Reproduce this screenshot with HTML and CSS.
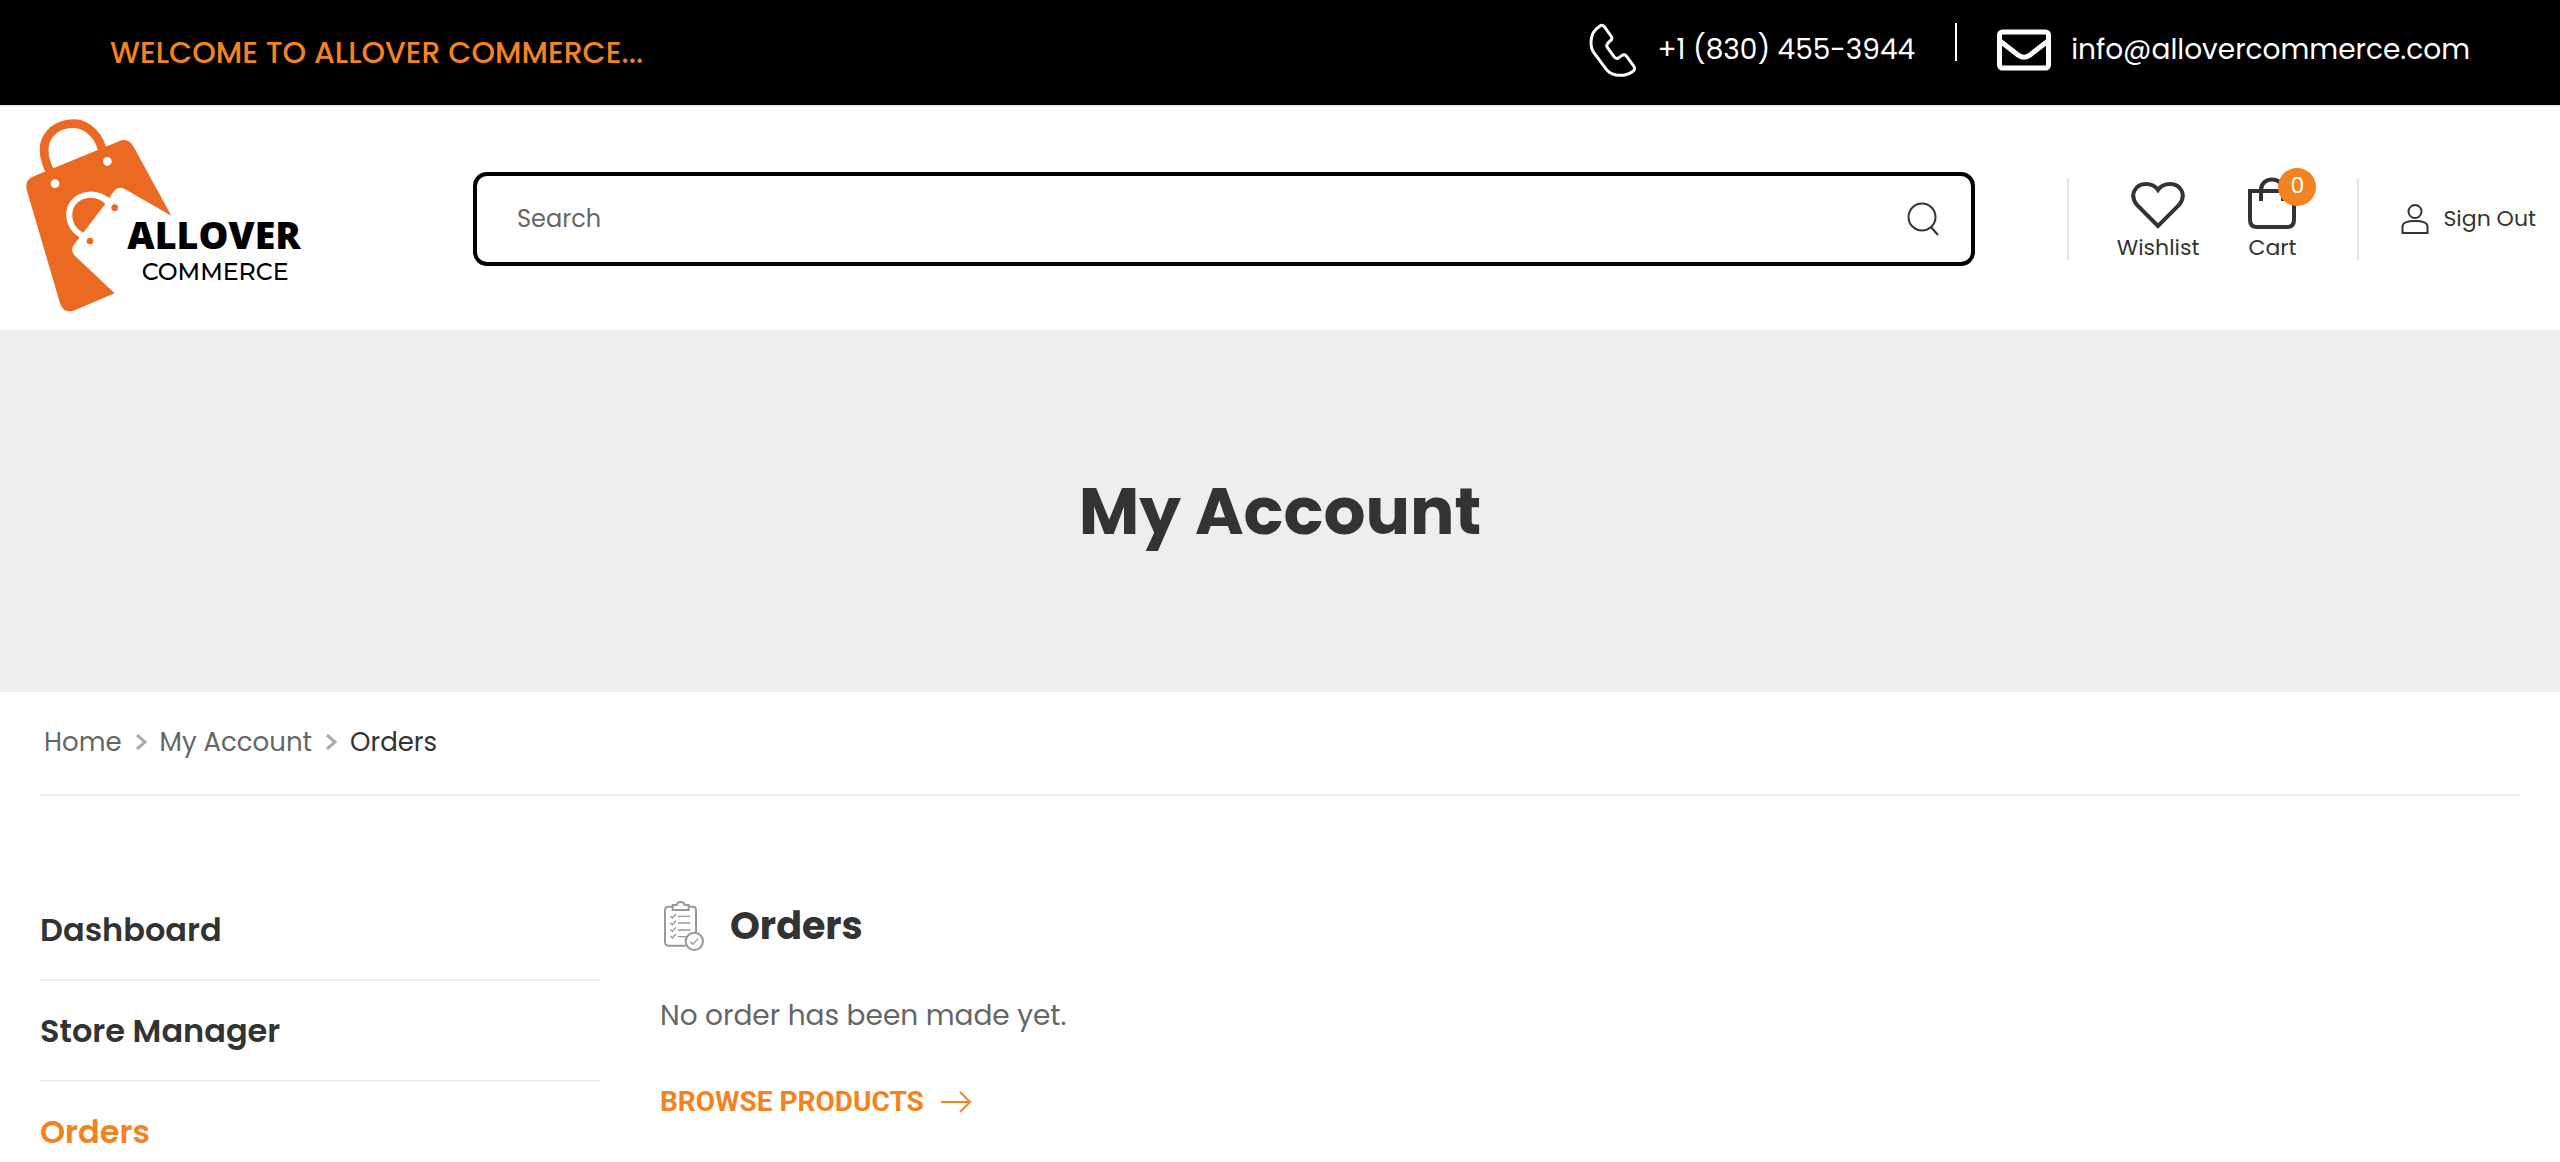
FILE: index.html
```html
<!DOCTYPE html>
<html lang="en">
<head>
<meta charset="utf-8">
<meta name="viewport" content="width=device-width, initial-scale=1">
<title>My Account – Orders | Allover Commerce</title>
<link rel="stylesheet" href="styles.css">
</head>
<body>
<div class="topbar">
  <p class="welcome">WELCOME TO ALLOVER COMMERCE...</p>
  <div class="contact">
    <a class="contact-link" href="tel:+18304553944">
      <svg class="icon-phone" viewBox="0 0 144 162" aria-hidden="true"><path d="M34 8 C16 20 6 32 6 62 Q6 76 14 88 L52 139 C62 152 76 157 94 157 Q114 157 130 146 Q141 139 134 129 L113 100 Q107 92 98 98 L90 104 Q82 110 75 101 L56 75 Q50 66 58 59 L64 53 Q72 48 66 39 L46 11 Q40 4 34 8 Z"/></svg>
      <span>+1 (830) 455-3944</span>
    </a>
    <span class="contact-divider"></span>
    <a class="contact-link" href="mailto:info@allovercommerce.com">
      <svg class="icon-mail" viewBox="0 0 54 42" aria-hidden="true"><rect x="2.500" y="3" width="49" height="36" rx="3"/><path d="M3 12 L21 26 Q27 30.500 33 26 L51 12"/></svg>
      <span>info@allovercommerce.com</span>
    </a>
  </div>
</div>

<header class="header">
  <a class="logo" href="#" aria-label="Allover Commerce">
    <svg class="logo-art" viewBox="42 40 840 597">
      <path class="logo-handle" d="M121 200 C96 150 96 112 120 84 C146 52 200 44 234 68 C258 84 270 106 277 132"/>
      <path class="logo-bag" d="M68 213 L334 104 Q356 98 370 122 L484 330 L344 250 Q326 240 312 256 L298 277 C276 260 252 254 228 259 C196 264 172 290 169 318 C166 350 180 378 209 395 L190 420 Q182 434 192 448 L314 563 L190 615 Q162 624 151 596 L50 252 Q44 224 68 213 Z"/>
      <path class="logo-bag" d="M286 294 C268 276 240 271 218 281 C196 291 186 310 187 330 C188 354 200 370 220 381 Z"/>
      <circle class="logo-hole" cx="135" cy="234" r="13"/>
      <circle class="logo-hole" cx="292" cy="167" r="13"/>
      <circle class="logo-bag" cx="314" cy="306" r="10"/>
      <circle class="logo-bag" cx="240" cy="406" r="10"/>
      <text class="logo-name" x="352" y="430">ALLOVER</text>
      <text class="logo-sub" x="395" y="523">COMMERCE</text>
    </svg>
  </a>
  <form class="search" role="search">
    <input class="search-input" type="search" placeholder="Search" aria-label="Search">
    <button class="search-button" type="submit" aria-label="Search">
      <svg class="icon-search" viewBox="0 0 32 36" aria-hidden="true"><circle cx="15" cy="16" r="13.500"/><path d="M24 26 L31 34"/></svg>
    </button>
  </form>
  <nav class="tools" aria-label="Shop tools">
    <a class="tool" href="#">
      <svg class="icon-tool" viewBox="0 0 54 54" aria-hidden="true"><path d="M27 50 L6 29 C-2 19 4 8 15 8 C21 8 25 11 27 14 C29 11 33 8 39 8 C50 8 56 19 48 29 Z"/></svg>
      <span>Wishlist</span>
    </a>
    <a class="tool" href="#">
      <span class="cart-icon">
        <svg class="icon-tool" viewBox="0 0 54 54" aria-hidden="true"><path d="M5 15 H49 V44 Q49 51 42 51 H12 Q5 51 5 44 Z M16 25 V14 C16 0 38 0 38 14 V25"/></svg>
        <span class="badge">0</span>
      </span>
      <span>Cart</span>
    </a>
  </nav>
  <a class="sign-out" href="#">
    <svg class="icon-user" viewBox="0 0 28 32" aria-hidden="true"><circle cx="14" cy="8.500" r="6.500"/><path d="M1.500 30 V23 C2 19.500 8 18 14 18 S26 19.500 26.500 23 V30 Z"/></svg>
    <span>Sign Out</span>
  </a>
</header>

<div class="banner"><h1 class="banner-title">My Account</h1></div>

<div class="container">
  <nav class="breadcrumb" aria-label="Breadcrumb">
    <a href="#">Home</a>
    <svg class="icon-chevron" viewBox="0 0 12 16" aria-hidden="true"><path d="M2 1 L10 8 L2 15"/></svg>
    <a href="#">My Account</a>
    <svg class="icon-chevron" viewBox="0 0 12 16" aria-hidden="true"><path d="M2 1 L10 8 L2 15"/></svg>
    <span class="breadcrumb-current" aria-current="page">Orders</span>
  </nav>
  <div class="account">
    <nav class="side-nav" aria-label="Account">
      <a class="side-link" href="#">Dashboard</a>
      <a class="side-link" href="#">Store Manager</a>
      <a class="side-link side-link-active" href="#">Orders</a>
    </nav>
    <main class="orders">
      <h2 class="orders-title">
        <svg class="icon-orders" viewBox="0 0 120 150" aria-hidden="true"><path class="orders-frame" d="M65 134 H14 Q3 134 3 123 V27 Q3 17 14 17 H26 M74 17 H86 Q96 17 96 27 V93 M26 12 H38 C40 0 60 0 62 12 H74 V27 H26 Z"/><circle class="orders-frame" cx="91" cy="121" r="26"/><path class="orders-lines" d="M42 46 H79 M42 66 H79 M42 87 H79 M42 107 H66 M19 45 L25 51 L36 39 M19 65 L25 71 L36 59 M19 85 L25 91 L36 79 M19 105 L25 111 L36 99 M79 122 L87 130 L102 113"/></svg>
        <span>Orders</span>
      </h2>
      <p class="orders-text">No order has been made yet.</p>
      <a class="browse" href="#">
        <span>BROWSE PRODUCTS</span>
        <svg class="icon-arrow" viewBox="0 0 32 24" aria-hidden="true"><path d="M1 12 H30 M20 2 L30 12 L20 22"/></svg>
      </a>
    </main>
  </div>
</div>
</body>
</html>
```
FILE: styles.css
```css
:root {
  --orange: #f38321;
  --ink: #333;
  --line: #eee;
}

* { box-sizing: border-box; }

body {
  margin: 0;
  background: #fff;
  color: #666;
  font: 28px/40px Poppins, Inter, sans-serif;
}

a { color: inherit; text-decoration: none; }
h1, h2, p { margin: 0; }
svg { display: block; flex: none; fill: none; stroke: currentColor; }

.topbar {
  display: flex;
  align-items: center;
  justify-content: space-between;
  padding: 0 90px 0 110px;
  height: 107px;
  background: #000;
  border-bottom: 2px solid var(--line);
  color: #fff;
}
.welcome { color: var(--orange); font-size: 30px; font-weight: 500; }
.contact { display: flex; align-items: center; gap: 40px; padding-bottom: 6px; }
.contact-link { display: flex; align-items: center; gap: 20px; }
.contact-divider { align-self: flex-start; width: 2px; height: 38px; background: #fff; }
.icon-phone { width: 48px; height: 54px; stroke-width: 9; }
.icon-mail { width: 54px; height: 42px; stroke-width: 5; }

.header {
  display: flex;
  align-items: center;
  padding: 12px 24px;
  color: var(--ink);
  font-size: 22px;
}
.logo { flex: none; margin-right: 169px; }
.logo-art { width: 280px; height: 199px; }
.logo-handle { stroke: #eb6a23; stroke-width: 26; }
.logo-bag { fill: #eb6a23; stroke: none; }
.logo-hole { fill: #fff; stroke: none; }
.logo-name { font: 800 113px "Open Sans", sans-serif; fill: #000; stroke: none; }
.logo-sub { font: 500 71px Montserrat, Inter, sans-serif; fill: #000; stroke: none; }

.search {
  display: flex;
  align-items: center;
  flex: 1;
  height: 94px;
  padding: 0 32px 0 40px;
  border: 4px solid #000;
  border-radius: 14px;
}
.search-input {
  flex: 1;
  min-width: 0;
  padding: 0;
  border: 0;
  outline: 0;
  background: none;
  color: #666;
  font: inherit;
  font-size: 24px;
}
.search-input::placeholder { color: #666; opacity: 1; }
.search-button { padding: 0; border: 0; background: none; color: var(--ink); }
.icon-search { width: 32px; height: 36px; stroke-width: 2; }

.tools {
  display: flex;
  align-items: center;
  gap: 46px;
  height: 82px;
  margin: 0 42px 0 92px;
  padding: 0 58px 0 48px;
  border: solid #e5e5e5;
  border-width: 0 2px;
}
.tool { display: flex; flex-direction: column; align-items: center; gap: 4px; line-height: 28px; }
.icon-tool { width: 54px; height: 54px; stroke-width: 4; }
.cart-icon { position: relative; }
.badge {
  position: absolute;
  top: -8px;
  right: -17px;
  width: 38px;
  height: 38px;
  border-radius: 50%;
  background: var(--orange);
  color: #fff;
  line-height: 36px;
  text-align: center;
}
.sign-out { display: flex; align-items: center; gap: 14px; white-space: nowrap; }
.icon-user { width: 28px; height: 32px; stroke-width: 2; }

.banner {
  display: flex;
  align-items: center;
  justify-content: center;
  height: 362px;
  background: #eee;
}
.banner-title { color: var(--ink); font-size: 66px; font-weight: 700; line-height: 80px; }

.container { padding: 0 40px; }
.breadcrumb {
  display: flex;
  align-items: center;
  gap: 13px;
  height: 104px;
  padding: 0 4px 2px;
  border-bottom: 2px solid var(--line);
  font-size: 26px;
}
.icon-chevron { width: 12px; height: 16px; color: #aaa; stroke-width: 3; }
.breadcrumb-current { color: var(--ink); }

.account { display: flex; gap: 60px; padding-top: 84px; }
.side-nav { flex: none; width: 560px; }
.side-link {
  display: block;
  padding: 30px 0 29px;
  border-bottom: 2px solid var(--line);
  color: var(--ink);
  font-size: 32px;
  font-weight: 600;
}
.side-link:last-child { border-bottom: 0; }
.side-link-active { color: var(--orange); }

.orders { flex: 1; padding-top: 18px; }
.orders-title {
  display: flex;
  align-items: center;
  gap: 26px;
  padding-left: 4px;
  color: var(--ink);
  font-size: 38px;
  font-weight: 700;
  line-height: 56px;
}
.icon-orders { width: 40px; height: 50px; color: #999; }
.orders-frame { stroke-width: 6; }
.orders-lines { stroke-width: 4; }
.orders-text { margin-top: 42px; }
.browse {
  display: inline-flex;
  align-items: center;
  gap: 16px;
  margin-top: 46px;
  color: var(--orange);
  font-family: Roboto, sans-serif;
  font-weight: 700;
}
.icon-arrow { width: 32px; height: 24px; stroke-width: 2; }
```
